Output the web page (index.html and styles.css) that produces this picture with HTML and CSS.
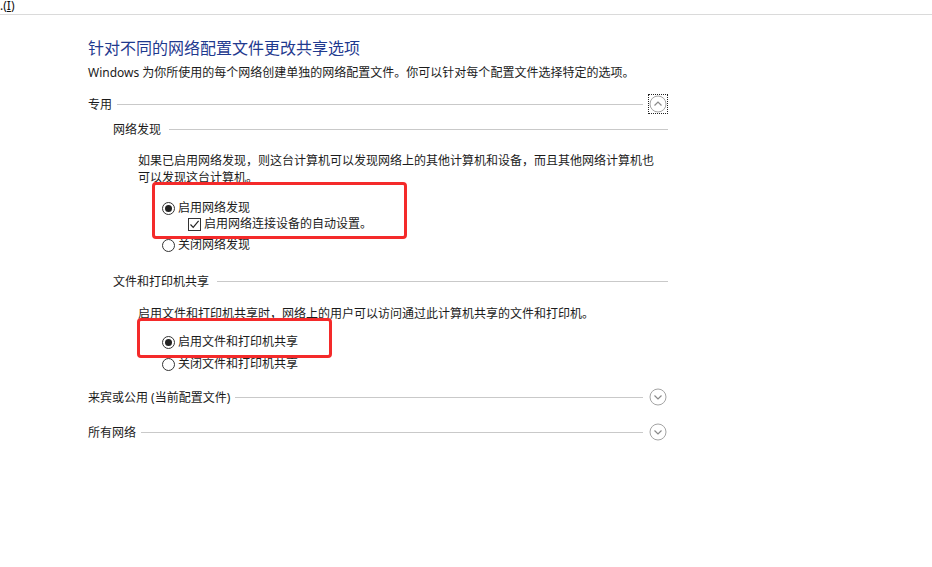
FILE: index.html
```html
<!DOCTYPE html>
<html>
<head>
  <meta charset="utf-8">
  <link rel="stylesheet" href="styles.css">
</head>
<body>
  <div class="topbar"><span class="cut">.(<u>I</u>)</span></div>

  <div class="page">
    <h1 class="title">针对不同的网络配置文件更改共享选项</h1>
    <p class="intro">Windows 为你所使用的每个网络创建单独的网络配置文件。你可以针对每个配置文件选择特定的选项。</p>

    <!-- 专用 -->
    <div class="profile">
      <div class="profile-head">
        <span>专用</span>
        <span class="rule"></span>
        <span class="chev focus">
          <svg width="18" height="18" viewBox="0 0 18 18"><circle cx="9" cy="9" r="8" /><polyline points="5.5,10.5 9,7 12.5,10.5" /></svg>
        </span>
      </div>

      <div class="group">
        <div class="group-head"><span>网络发现</span><span class="rule"></span></div>
        <p class="desc">如果已启用网络发现，则这台计算机可以发现网络上的其他计算机和设备，而且其他网络计算机也可以发现这台计算机。</p>
        <div class="options opts-discovery">
          <label class="opt"><span class="radio on"></span>启用网络发现</label>
          <label class="opt sub"><span class="check">
            <svg width="11" height="11" viewBox="0 0 11 11"><polyline points="1.5,5.5 4.2,8.3 9.6,1.8" /></svg>
          </span>启用网络连接设备的自动设置。</label>
          <label class="opt gap"><span class="radio"></span>关闭网络发现</label>
        </div>
      </div>

      <div class="group group-share">
        <div class="group-head"><span>文件和打印机共享</span><span class="rule"></span></div>
        <p class="desc">启用文件和打印机共享时，网络上的用户可以访问通过此计算机共享的文件和打印机。</p>
        <div class="options opts-share">
          <label class="opt"><span class="radio on"></span>启用文件和打印机共享</label>
          <label class="opt gap"><span class="radio"></span>关闭文件和打印机共享</label>
        </div>
      </div>
    </div>

    <div class="profile-head collapsed guest">
      <span>来宾或公用 (当前配置文件)</span>
      <span class="rule"></span>
      <span class="chev">
        <svg width="18" height="18" viewBox="0 0 18 18"><circle cx="9" cy="9" r="8" /><polyline points="5.5,7.5 9,11 12.5,7.5" /></svg>
      </span>
    </div>

    <div class="profile-head collapsed all">
      <span>所有网络</span>
      <span class="rule"></span>
      <span class="chev">
        <svg width="18" height="18" viewBox="0 0 18 18"><circle cx="9" cy="9" r="8" /><polyline points="5.5,7.5 9,11 12.5,7.5" /></svg>
      </span>
    </div>
  </div>

  <!-- red annotation boxes drawn over the screenshot -->
  <div class="mark mark-discovery"></div>
  <div class="mark mark-share"></div>
</body>
</html>
```

FILE: styles.css
```css
body {
  margin: 0;
  background: #fff;
  color: #1b1b1b;
  font-family: "Segoe UI", "Noto Sans", "Noto Sans CJK SC", sans-serif;
  font-size: 12px;
  position: relative;
  min-height: 567px;
}

.topbar {
  height: 14px;
  border-bottom: 1px solid #dadada;
  overflow: hidden;
}

.topbar .cut {
  display: block;
  line-height: 12px;
  font-size: 12px;
  color: #111;
}

.page {
  width: 580px;
  padding-left: 88px;
}

.title {
  margin: 22px 0 0;
  font-size: 16px;
  font-weight: normal;
  line-height: 20px;
  color: #1f3a8f;
  font-family: "Noto Sans CJK SC", sans-serif;
}

.intro {
  margin: 7px 0 0;
  line-height: 17px;
}

.profile-head {
  display: flex;
  align-items: center;
  height: 20px;
  margin-top: 13px;
  line-height: 17px;
}

.rule {
  flex: 1;
  height: 0;
  border-top: 1px solid #c9c9c9;
  margin: 0 5px 0 5px;
}

.chev {
  width: 20px;
  height: 20px;
  box-sizing: border-box;
  display: flex;
  align-items: center;
  justify-content: center;
}

.chev.focus {
  border: 1px dotted #222;
}

.chev svg circle {
  fill: none;
  stroke: #a4a4a4;
  stroke-width: 1;
}

.chev svg polyline {
  fill: none;
  stroke: #8a8a8a;
  stroke-width: 1.2;
}

.group {
  padding-left: 25px;
}

.group-head {
  display: flex;
  align-items: center;
  height: 17px;
  margin-top: 7px;
  line-height: 17px;
}

.group-head .rule {
  margin: 0 0 0 8px;
}

.group-share .group-head {
  margin-top: 20px;
}

.desc {
  margin: 14px 0 0 25px;
  width: 520px;
  line-height: 17px;
}

.group-share .desc {
  margin-top: 15px;
}

.options {
  padding-left: 49px;
  margin-top: 14px;
}

.opts-share {
  margin-top: 12px;
}

.opt {
  display: flex;
  align-items: center;
  height: 16px;
  line-height: 16px;
}

.opt.sub {
  padding-left: 26px;
}

.opt.gap {
  margin-top: 5px;
}

.opts-share .opt.gap {
  margin-top: 6px;
}

.radio {
  width: 13px;
  height: 13px;
  box-sizing: border-box;
  border: 1px solid #333;
  border-radius: 50%;
  margin-right: 3px;
  display: flex;
  align-items: center;
  justify-content: center;
}

.radio.on::after {
  content: "";
  width: 7px;
  height: 7px;
  border-radius: 50%;
  background: #222;
}

.check {
  width: 13px;
  height: 13px;
  box-sizing: border-box;
  border: 1px solid #333;
  margin-right: 3px;
  display: flex;
  align-items: center;
  justify-content: center;
}

.check polyline {
  fill: none;
  stroke: #222;
  stroke-width: 1.2;
}

.profile-head.guest {
  margin-top: 15px;
}

.profile-head.all {
  margin-top: 15px;
}

.mark {
  position: absolute;
  border: 3px solid #f42a2a;
  border-radius: 4px;
  box-sizing: border-box;
}

.mark-discovery {
  left: 152px;
  top: 182px;
  width: 255px;
  height: 57px;
}

.mark-share {
  left: 137px;
  top: 318px;
  width: 195px;
  height: 40px;
}
```
